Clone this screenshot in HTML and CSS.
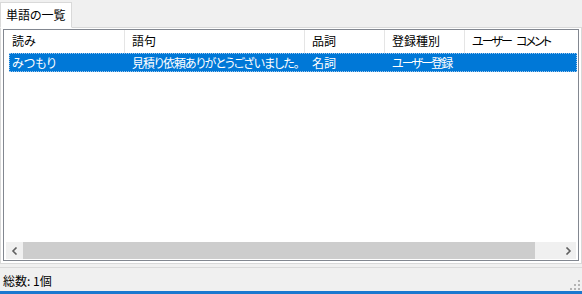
FILE: index.html
```html
<!DOCTYPE html>
<html lang="ja">
<head>
  <meta charset="UTF-8">
  <title>単語の一覧</title>
  <link rel="stylesheet" href="styles.css">
</head>
<body>
  <div class="window">
    <div class="tabs">
      <div class="tab active">単語の一覧</div>
    </div>
    <div class="page">
      <div class="listview">
        <div class="header">
          <div class="col c1">読み</div>
          <div class="col c2">語句</div>
          <div class="col c3">品詞</div>
          <div class="col c4">登録種別</div>
          <div class="col c5 kana-tight">ユーザー<span class="gap"></span>コメント</div>
        </div>
        <div class="rows">
          <div class="row selected">
            <div class="cell c1">みつもり</div>
            <div class="cell c2 kana">見積り依頼ありがとうございました。</div>
            <div class="cell c3">名詞</div>
            <div class="cell c4 kana-tight">ユーザー登録</div>
            <div class="cell c5"></div>
          </div>
        </div>
        <div class="hscroll">
          <div class="arrow left">
            <svg width="8" height="8" viewBox="0 0 8 8"><path d="M5.5 0.5 L2 4 L5.5 7.5" fill="none" stroke="#606060" stroke-width="1.6"/></svg>
          </div>
          <div class="track"><div class="thumb"></div></div>
          <div class="arrow right">
            <svg width="8" height="8" viewBox="0 0 8 8"><path d="M2.5 0.5 L6 4 L2.5 7.5" fill="none" stroke="#606060" stroke-width="1.6"/></svg>
          </div>
        </div>
      </div>
    </div>
    <div class="statusbar">
      <span class="status-text">総数: 1個</span>
      <div class="grip">
        <svg width="10" height="10" viewBox="0 0 10 10" fill="#b4b4b4">
          <rect x="8" y="0" width="2" height="2"/>
          <rect x="4" y="4" width="2" height="2"/><rect x="8" y="4" width="2" height="2"/>
          <rect x="0" y="8" width="2" height="2"/><rect x="4" y="8" width="2" height="2"/><rect x="8" y="8" width="2" height="2"/>
        </svg>
      </div>
    </div>
    <div class="bottom-edge"></div>
  </div>
</body>
</html>
```

FILE: styles.css
```css
* {
  margin: 0;
  padding: 0;
  box-sizing: border-box;
}

body {
  width: 582px;
  height: 294px;
  background: #f0f0f0;
  font-family: "Noto Sans CJK JP", "Noto Sans", sans-serif;
  font-size: 12px;
  font-feature-settings: "palt";
  color: #000;
  overflow: hidden;
}

.window {
  display: flex;
  flex-direction: column;
  height: 294px;
}

.tabs {
  display: flex;
  height: 28px;
  padding-top: 2px;
  position: relative;
  z-index: 1;
  margin-bottom: -1px;
}

.tab {
  width: 72px;
  padding-left: 5px;
  line-height: 24px;
  background: #fff;
  border: 1px solid #d9d9d9;
  border-bottom: 1px solid #fff;
}

.page {
  height: 237px;
  background: #fff;
  border: 1px solid #d9d9d9;
  padding: 1px 2px 2px 2px;
}

.listview {
  height: 232px;
  border: 1px solid #828790;
  display: flex;
  flex-direction: column;
}

.header {
  display: flex;
  height: 23px;
  flex: none;
}

.col {
  padding-left: 7px;
  line-height: 22px;
  border-right: 1px solid #e5e5e5;
  white-space: nowrap;
}

.header .c1 { width: 121px; padding-left: 8px; }
.header .c2 { width: 180px; }
.header .c3 { width: 80px; }
.header .c4 { width: 80px; }
.header .c5 { width: 105px; border-right: none; }

/* kana runs in the original UI font are narrower than the kanji */
.kana { letter-spacing: -1px; }
.kana-tight { letter-spacing: -1.9px; }

.gap {
  display: inline-block;
  width: 5px;
}

.rows {
  flex: 1;
  padding-left: 5px;
  padding-right: 1px;
}

.row {
  display: flex;
  height: 19px;
  line-height: 17px;
  white-space: nowrap;
}

.row.selected {
  background: #0078d7;
  color: #fff;
  border: 1px dotted #9fc6ec;
}

.cell {
  padding-left: 7px;
  overflow: hidden;
}

.row .c1 { width: 115px; padding-left: 2px; }
.row .c2 { width: 180px; }
.row .c3 { width: 80px; }
.row .c4 { width: 80px; }
.row .c5 { flex: 1; }

.hscroll {
  display: flex;
  height: 17px;
  margin: 0 2px 1px 2px;
  background: #f0f0f0;
}

.arrow {
  width: 17px;
  display: flex;
  align-items: center;
  justify-content: center;
}

.track {
  flex: 1;
  display: flex;
}

.thumb {
  width: 512px;
  background: #cdcdcd;
}

.statusbar {
  flex: 1;
  display: flex;
  align-items: center;
  justify-content: space-between;
  border-top: 1px solid #dadada;
  margin-top: 3px;
  padding-left: 3px;
}

.status-text {
  line-height: 16px;
  margin-top: 2px;
}

.grip {
  align-self: flex-end;
  margin: 0 2px 1px 0;
  line-height: 0;
}

.bottom-edge {
  height: 3px;
  background: #1a78cf;
}
```
